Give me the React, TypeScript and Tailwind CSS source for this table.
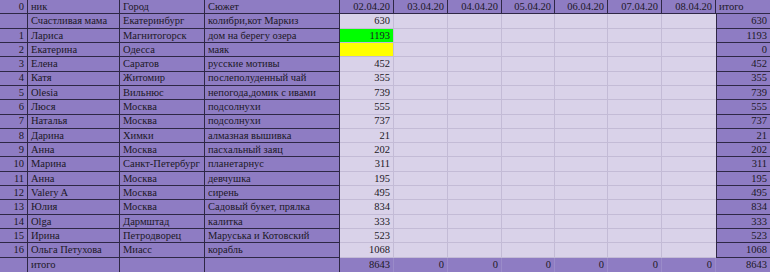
import React from "react";

type Row = { idx: string; nick: string; city: string; plot: string; v: string; total: string; bg?: string };

const rows: Row[] = [
  { idx: "", nick: "Счастливая мама", city: "Екатеринбург", plot: "колибри,кот Маркиз", v: "630", total: "630" },
  { idx: "1", nick: "Лариса", city: "Магнитогорск", plot: "дом на берегу озера", v: "1193", total: "1193", bg: "bg-[#00ff00]" },
  { idx: "2", nick: "Екатерина", city: "Одесса", plot: "маяк", v: "", total: "0", bg: "bg-[#ffff00]" },
  { idx: "3", nick: "Елена", city: "Саратов", plot: "русские мотивы", v: "452", total: "452" },
  { idx: "4", nick: "Катя", city: "Житомир", plot: "послеполуденный чай", v: "355", total: "355" },
  { idx: "5", nick: "Olesia", city: "Вильнюс", plot: "непогода,домик с ивами", v: "739", total: "739" },
  { idx: "6", nick: "Люся", city: "Москва", plot: "подсолнухи", v: "555", total: "555" },
  { idx: "7", nick: "Наталья", city: "Москва", plot: "подсолнухи", v: "737", total: "737" },
  { idx: "8", nick: "Дарина", city: "Химки", plot: "алмазная вышивка", v: "21", total: "21" },
  { idx: "9", nick: "Анна", city: "Москва", plot: "пасхальный заяц", v: "202", total: "202" },
  { idx: "10", nick: "Марина", city: "Санкт-Петербург", plot: "планетарнус", v: "311", total: "311" },
  { idx: "11", nick: "Анна", city: "Москва", plot: "девчушка", v: "195", total: "195" },
  { idx: "12", nick: "Valery A", city: "Москва", plot: "сирень", v: "495", total: "495" },
  { idx: "13", nick: "Юлия", city: "Москва", plot: "Садовый букет, прялка", v: "834", total: "834" },
  { idx: "14", nick: "Olga", city: "Дармштад", plot: "калитка", v: "333", total: "333" },
  { idx: "15", nick: "Ирина", city: "Петродворец", plot: "Маруська и Котовский", v: "523", total: "523" },
  { idx: "16", nick: "Ольга Петухова", city: "Миасс", plot: "корабль", v: "1068", total: "1068" },
];

const dates = ["03.04.20", "04.04.20", "05.04.20", "06.04.20", "07.04.20", "08.04.20"];

const P = "bg-[#8e7cc3] border-r border-b border-[#2e2745]";
const L = "bg-[#d9d2e9] border-r border-b border-[#c3bbd6]";
const base = "flex items-center overflow-hidden whitespace-nowrap px-[3px] pt-[1px] leading-none";

export default function App() {
  return (
    <div
      className="grid w-[770px] h-[272px] text-[10.5px] text-[#1c1826] bg-[#8e7cc3]"
      style={{ fontFamily: '"Liberation Serif", "Times New Roman", serif', gridTemplateColumns: "28px 92px 85px 135px 54px 54px 54px 53px 53px 54px 54px 54px", gridTemplateRows: "repeat(19, minmax(0, 1fr))" }}
    >
      {/* header */}
      <div className={`${base} ${P} justify-end`}>0</div>
      <div className={`${base} ${P}`}>ник</div>
      <div className={`${base} ${P}`}>Город</div>
      <div className={`${base} ${P}`}>Сюжет</div>
      <div className={`${base} ${P} justify-end`}>02.04.20</div>
      {dates.map((d) => (
        <div key={d} className={`${base} ${P} justify-end`}>{d}</div>
      ))}
      <div className={`${base} ${P} border-r-0`}>итого</div>

      {rows.map((r, i) => (
        <React.Fragment key={i}>
          <div className={`${base} ${P} justify-end`}>{r.idx}</div>
          <div className={`${base} ${P}`}>{r.nick}</div>
          <div className={`${base} ${P}`}>{r.city}</div>
          <div className={`${base} ${P}`}>{r.plot}</div>
          <div className={`${base} ${r.bg ? `${r.bg} border-r border-b border-[#c3bbd6]` : L} justify-end`}>{r.v}</div>
          {dates.map((d, j) => (
            <div key={d} className={`${base} ${j === dates.length - 1 ? "bg-[#d9d2e9] border-b border-[#c3bbd6]" : L}`}></div>
          ))}
          <div className={`${base} bg-[#8e7cc3] border-l border-b border-[#2e2745] justify-end`}>{r.total}</div>
        </React.Fragment>
      ))}

      {/* total row */}
      <div className={`${base} bg-[#8e7cc3] border-r border-[#2e2745]`}></div>
      <div className={`${base} bg-[#8e7cc3] border-r border-[#2e2745]`}>итого</div>
      <div className={`${base} bg-[#8e7cc3] border-r border-[#2e2745]`}></div>
      <div className={`${base} bg-[#8e7cc3] border-r border-[#2e2745]`}></div>
      <div className={`${base} bg-[#8e7cc3] border-r border-[#9a8bc9] justify-end`}>8643</div>
      {dates.map((d) => (
        <div key={d} className={`${base} bg-[#8e7cc3] border-r border-[#9a8bc9] justify-end`}>0</div>
      ))}
      <div className={`${base} bg-[#8e7cc3] justify-end`}>8643</div>
    </div>
  );
}
